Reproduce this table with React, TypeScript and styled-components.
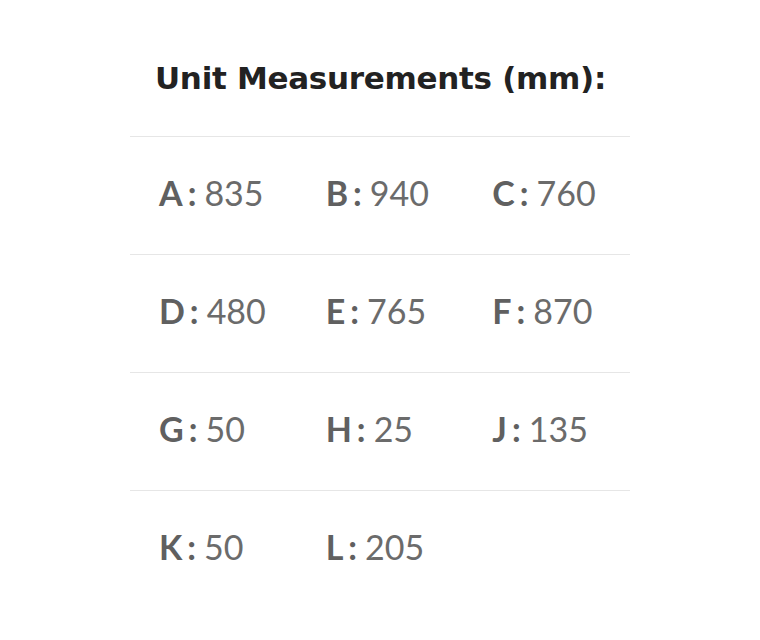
import styled, { createGlobalStyle } from "styled-components";

const Global = createGlobalStyle`
    body {
        margin:0;
        background:#fff;
    }
`;

const Wrapper = styled.div`
    width:500px;
    margin:0 auto;
    padding-top:56px;
`;

const Title = styled.h2`
    margin:0;
    height:80px;
    padding-left:25px;
    font-family:"DejaVu Sans", "Inter", sans-serif;
    font-weight:700;
    font-size:31px;
    line-height:44px;
    color:#222;
    letter-spacing:-0.3px;
`;

const Row = styled.div`
    display:grid;
    grid-template-columns:repeat(3, 1fr);
    height:117px;
    align-items:center;
    border-top:1px solid #e6e6e6;
`;

const Cell = styled.div`
    padding-left:29px;
    padding-bottom:6px;
    font-family:"Lato", sans-serif;
    font-size:34px;
    color:#6b6b6b;
`;

const Key = styled.span`
    font-weight:700;
    color:#606060;
`;

const Colon = styled.span`
    font-weight:700;
    color:#606060;
    margin:0 8px 0 5px;
`;

const rows = [
    [["A", "835"], ["B", "940"], ["C", "760"]],
    [["D", "480"], ["E", "765"], ["F", "870"]],
    [["G", "50"], ["H", "25"], ["J", "135"]],
    [["K", "50"], ["L", "205"]],
];

export default function App() {
    return <Wrapper>
        <Global />
        <Title>Unit Measurements (mm):</Title>
        {rows.map((row, i) => (
            <Row key={i}>
                {row.map(([k, v]) => (
                    <Cell key={k}>
                        <Key>{k}</Key><Colon>:</Colon>{v}
                    </Cell>
                ))}
            </Row>
        ))}
    </Wrapper>
}
